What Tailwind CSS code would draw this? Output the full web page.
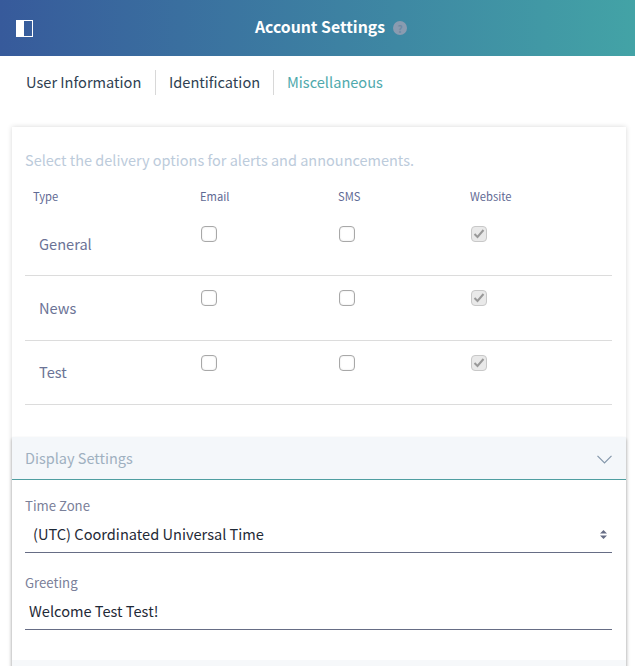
<!DOCTYPE html>
<html>
<head>
  <title>Account Settings</title>
  <script src="https://cdn.jsdelivr.net/npm/@tailwindcss/browser@4"></script>
</head>
<body class="bg-white font-['Noto_Sans_CJK_SC','Noto_Sans',sans-serif] overflow-hidden">
  <div class="h-[666px] overflow-hidden">
    <!-- Header -->
    <header class="relative h-14 flex items-center justify-center bg-gradient-to-r from-[#375a9b] to-[#43a3a6]">
      <button class="absolute left-4 top-5 w-[17px] h-[17px] border border-white flex">
        <span class="w-[7px] bg-white"></span>
      </button>
      <h1 class="ml-[27px] pb-[3px] text-white text-[15.8px] font-bold leading-none">Account Settings</h1>
      <span class="ml-2 w-3.5 h-3.5 rounded-full bg-[#8a9bb0] text-[#6f8aa3] text-[10px] font-bold flex items-center justify-center">?</span>
    </header>

    <!-- Tabs -->
    <nav class="flex h-[71px] pt-[14px] text-[14.6px] leading-[23px]">
      <a class="h-[25px] w-[156px] pl-[26px] border-r border-[#d8d8d8] text-[#2f3f52]">User Information</a>
      <a class="h-[25px] w-[118px] pl-[13px] border-r border-[#d8d8d8] text-[#2f3f52]">Identification</a>
      <a class="h-[25px] pl-[13px] text-[#4fa9ac]">Miscellaneous</a>
    </nav>

    <!-- Card -->
    <main class="ml-3 mr-[9px] shadow-[0_0_5px_rgba(0,0,0,0.16)] bg-white">
      <section class="pl-[13px] pr-[14px] pt-[23px] h-[310px]">
        <p class="text-[14.5px] leading-5 text-[#bccbdb]">Select the delivery options for alerts and announcements.</p>

        <div class="grid grid-cols-[175px_138px_132px_1fr] mt-[16px] text-[11.2px] leading-5 text-[#5f6a94]">
          <span class="pl-2">Type</span>
          <span>Email</span>
          <span>SMS</span>
          <span>Website</span>
        </div>

        <div class="mt-[5px]">
          <div class="grid grid-cols-[175px_138px_132px_1fr] h-[65px] border-b border-[#dcdcdc]">
            <span class="pl-[14px] pt-[21px] text-[14.6px] leading-6 text-[#6b7396]">General</span>
            <span class="pt-[15px]"><input type="checkbox" class="appearance-none block ml-px w-4 h-4 rounded-[4px] border border-[#a8a8a8] bg-white shadow-[inset_0_0_2px_rgba(0,0,0,0.12)]"></span>
            <span class="pt-[15px]"><input type="checkbox" class="appearance-none block ml-px w-4 h-4 rounded-[4px] border border-[#a8a8a8] bg-white shadow-[inset_0_0_2px_rgba(0,0,0,0.12)]"></span>
            <span class="pt-[15px]">
              <span class="relative block ml-px w-4 h-4 rounded-[4px] border border-[#c8c8c8] bg-[#e9e9e9]">
                <svg class="absolute left-[1px] top-[2px]" width="12" height="10" viewBox="0 0 12 10" fill="none"><path d="M1.5 5l3 3 6-7" stroke="#999999" stroke-width="2"/></svg>
              </span>
            </span>
          </div>
          <div class="grid grid-cols-[175px_138px_132px_1fr] h-[65px] border-b border-[#dcdcdc]">
            <span class="pl-[14px] pt-[20px] text-[14.6px] leading-6 text-[#6b7396]">News</span>
            <span class="pt-[14px]"><input type="checkbox" class="appearance-none block ml-px w-4 h-4 rounded-[4px] border border-[#a8a8a8] bg-white shadow-[inset_0_0_2px_rgba(0,0,0,0.12)]"></span>
            <span class="pt-[14px]"><input type="checkbox" class="appearance-none block ml-px w-4 h-4 rounded-[4px] border border-[#a8a8a8] bg-white shadow-[inset_0_0_2px_rgba(0,0,0,0.12)]"></span>
            <span class="pt-[14px]">
              <span class="relative block ml-px w-4 h-4 rounded-[4px] border border-[#c8c8c8] bg-[#e9e9e9]">
                <svg class="absolute left-[1px] top-[2px]" width="12" height="10" viewBox="0 0 12 10" fill="none"><path d="M1.5 5l3 3 6-7" stroke="#999999" stroke-width="2"/></svg>
              </span>
            </span>
          </div>
          <div class="grid grid-cols-[175px_138px_132px_1fr] h-[64px] border-b border-[#dcdcdc]">
            <span class="pl-[14px] pt-[19px] text-[14.6px] leading-6 text-[#6b7396]">Test</span>
            <span class="pt-[14px]"><input type="checkbox" class="appearance-none block ml-px w-4 h-4 rounded-[4px] border border-[#a8a8a8] bg-white shadow-[inset_0_0_2px_rgba(0,0,0,0.12)]"></span>
            <span class="pt-[14px]"><input type="checkbox" class="appearance-none block ml-px w-4 h-4 rounded-[4px] border border-[#a8a8a8] bg-white shadow-[inset_0_0_2px_rgba(0,0,0,0.12)]"></span>
            <span class="pt-[14px]">
              <span class="relative block ml-px w-4 h-4 rounded-[4px] border border-[#c8c8c8] bg-[#e9e9e9]">
                <svg class="absolute left-[1px] top-[2px]" width="12" height="10" viewBox="0 0 12 10" fill="none"><path d="M1.5 5l3 3 6-7" stroke="#999999" stroke-width="2"/></svg>
              </span>
            </span>
          </div>
        </div>
      </section>

      <!-- Display Settings -->
      <section class="shadow-[0_2px_3px_rgba(0,0,0,0.3)]">
        <div class="h-[43px] bg-[#f4f7fa] border-b border-[#4f9ea1] pl-[13px] pr-[14px] flex items-center justify-between">
          <span class="text-[14.5px] text-[#9fb0c0]">Display Settings</span>
          <svg width="15" height="9" viewBox="0 0 15 9" fill="none" class="mt-[3px]"><path d="M0.5 0.8L7.5 7.8L14.5 0.8" stroke="#8497aa" stroke-width="1.2"/></svg>
        </div>
        <div class="pl-[13px] pr-[14px] h-[180px] bg-white pt-[16px]">
          <label class="block text-[13.2px] leading-5 text-[#7a8099]">Time Zone</label>
          <div class="relative mt-[4px] h-[33px] border-b border-[#666d85]">
            <select class="appearance-none block w-full h-[28px] pl-2 text-[14.6px] text-[#1f2a37] bg-transparent outline-none">
              <option>(UTC) Coordinated Universal Time</option>
            </select>
            <svg class="absolute right-[5px] top-[10px]" width="7" height="9" viewBox="0 0 7 9" fill="#666d85"><path d="M3.5 0L7 3.5H0zM3.5 9L0 5.5h7z"/></svg>
          </div>
          <label class="block mt-[20px] text-[13.2px] leading-5 text-[#7a8099]">Greeting</label>
          <input type="text" value="Welcome Test Test!" class="block w-full mt-[4px] h-[33px] pl-1 pb-[5px] border-b border-[#666d85] text-[14.6px] text-[#1f2a37] outline-none">
        </div>
        <div class="h-6 bg-[#f6f8fa]"></div>
      </section>
    </main>
  </div>
</body>
</html>
